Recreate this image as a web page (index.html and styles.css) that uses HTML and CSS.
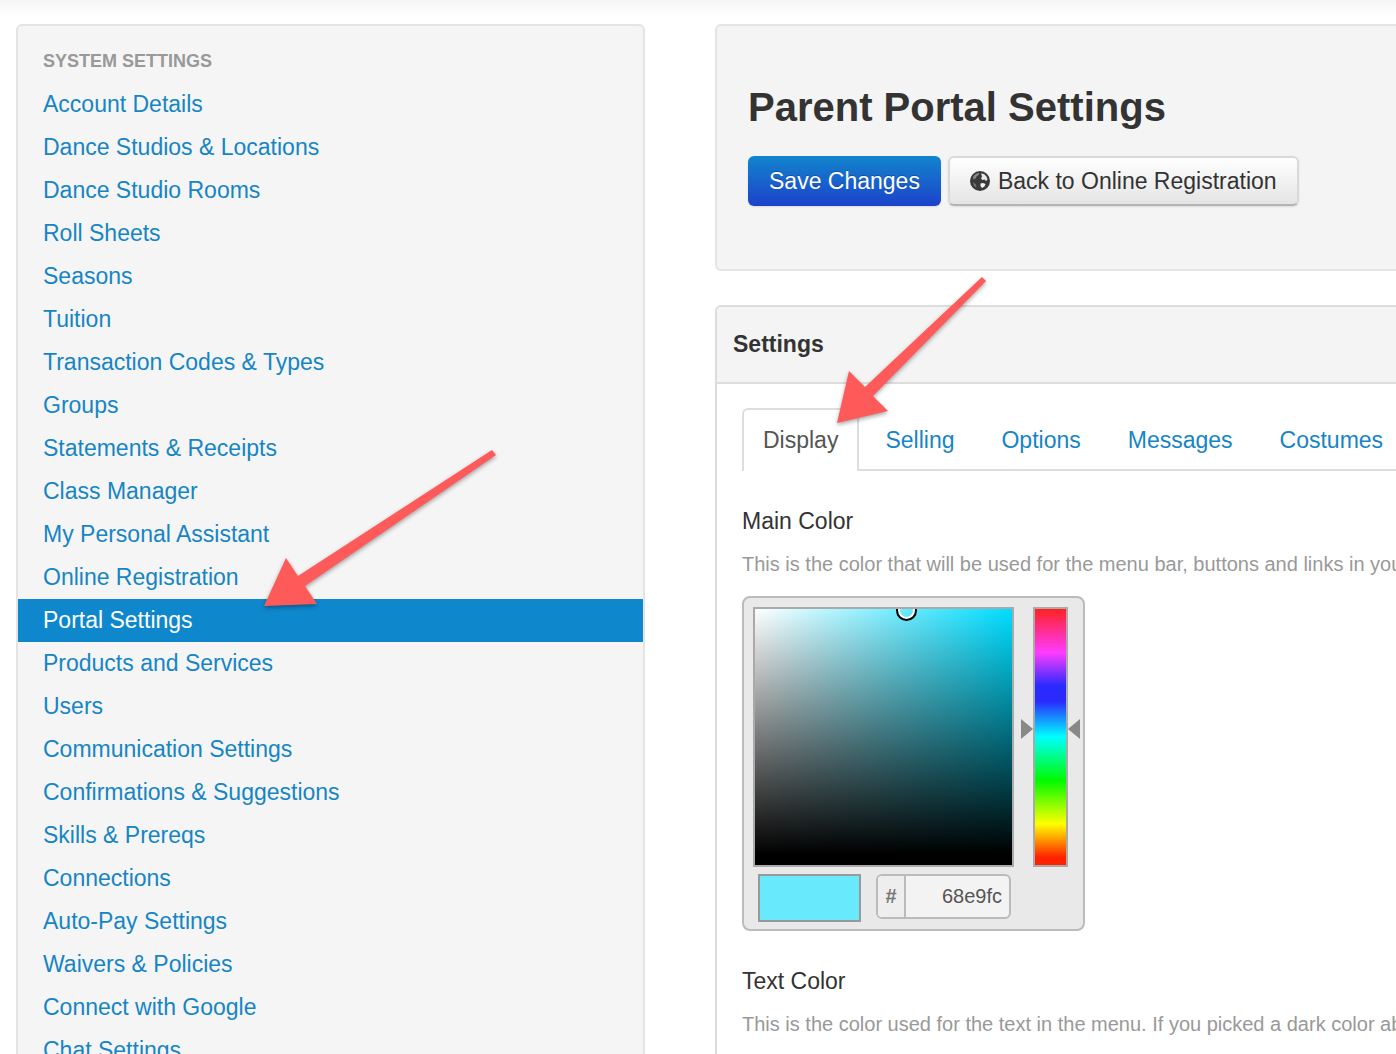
FILE: index.html
```html
<!DOCTYPE html>
<html lang="en">
<head>
<meta charset="utf-8">
<title>Parent Portal Settings</title>
<link rel="stylesheet" href="styles.css">
</head>
<body>
<div class="page">
  <nav class="sidebar" aria-labelledby="nav-title">
    <h2 class="nav-title" id="nav-title">System Settings</h2>
    <ul class="nav-list">
      <li><a class="nav-link" href="#">Account Details</a></li>
      <li><a class="nav-link" href="#">Dance Studios &amp; Locations</a></li>
      <li><a class="nav-link" href="#">Dance Studio Rooms</a></li>
      <li><a class="nav-link" href="#">Roll Sheets</a></li>
      <li><a class="nav-link" href="#">Seasons</a></li>
      <li><a class="nav-link" href="#">Tuition</a></li>
      <li><a class="nav-link" href="#">Transaction Codes &amp; Types</a></li>
      <li><a class="nav-link" href="#">Groups</a></li>
      <li><a class="nav-link" href="#">Statements &amp; Receipts</a></li>
      <li><a class="nav-link" href="#">Class Manager</a></li>
      <li><a class="nav-link" href="#">My Personal Assistant</a></li>
      <li><a class="nav-link" href="#">Online Registration</a></li>
      <li><a class="nav-link active" href="#" aria-current="page">Portal Settings</a></li>
      <li><a class="nav-link" href="#">Products and Services</a></li>
      <li><a class="nav-link" href="#">Users</a></li>
      <li><a class="nav-link" href="#">Communication Settings</a></li>
      <li><a class="nav-link" href="#">Confirmations &amp; Suggestions</a></li>
      <li><a class="nav-link" href="#">Skills &amp; Prereqs</a></li>
      <li><a class="nav-link" href="#">Connections</a></li>
      <li><a class="nav-link" href="#">Auto-Pay Settings</a></li>
      <li><a class="nav-link" href="#">Waivers &amp; Policies</a></li>
      <li><a class="nav-link" href="#">Connect with Google</a></li>
      <li><a class="nav-link" href="#">Chat Settings</a></li>
    </ul>
  </nav>

  <main class="content">
    <header class="hero">
      <h1 class="hero-title">Parent Portal Settings</h1>
      <div class="actions">
        <button class="btn btn-primary" type="button">Save Changes</button>
        <button class="btn" type="button">
          <svg class="globe" viewBox="0 0 20 20" aria-hidden="true">
            <circle cx="10" cy="10" r="10" fill="#3a3a3a"/>
            <path d="M3 6C4.500 3.500 7 2 9.500 2L8.500 4 6.500 5.500 5.500 7.500 3.500 8.500Z" fill="#8a8a8a"/>
            <path d="M11 2.500L14 3 16.500 5.500 17.500 8.500 16 10 14.500 8.500 12.500 9 11 7.500 12 5.500Z" fill="#e8e8e8"/>
            <path d="M10.500 12.500L13 12 15.500 13 14.500 15.500 12 17 10.500 15Z" fill="#f4f4f4"/>
            <path d="M3 11.500L5.500 13 6.500 15.500 6 16.500C4.500 15.500 3.300 13.500 3 11.500Z" fill="#777"/>
          </svg>
          Back to Online Registration
        </button>
      </div>
    </header>

    <section class="panel">
      <h2 class="panel-title">Settings</h2>
      <div class="panel-body">
        <ul class="tabs">
          <li><a class="tab active" href="#">Display</a></li>
          <li><a class="tab" href="#">Selling</a></li>
          <li><a class="tab" href="#">Options</a></li>
          <li><a class="tab" href="#">Messages</a></li>
          <li><a class="tab" href="#">Costumes</a></li>
        </ul>

        <div class="field">
          <label class="field-label" for="main-color">Main Color</label>
          <p class="help">This is the color that will be used for the menu bar, buttons and links in your portal.</p>
          <div class="picker">
            <div class="shade"><span class="shade-marker"></span></div>
            <div class="hue">
              <input class="hue-range" type="range" min="0" max="360" value="188" aria-label="Hue">
            </div>
            <div class="picker-value">
              <div class="swatch"></div>
              <div class="hex">
                <span class="hex-prefix">#</span>
                <input class="hex-input" id="main-color" type="text" value="68e9fc">
              </div>
            </div>
          </div>
        </div>

        <div class="field">
          <h3 class="field-label">Text Color</h3>
          <p class="help">This is the color used for the text in the menu. If you picked a dark color above, choose a light one.</p>
        </div>
      </div>
    </section>
  </main>

  <svg class="pointer pointer-nav" viewBox="0 0 240 170" aria-hidden="true">
    <path d="M4 161L26 113 38 131 232 5 236 10 45 141 57 159Z"/>
  </svg>
  <svg class="pointer pointer-tab" viewBox="0 0 160 160" aria-hidden="true">
    <path d="M7 153L19 101 35 117 152 7 156 11 43 126 58 141Z"/>
  </svg>
</div>
</body>
</html>
```

FILE: styles.css
```css
* {
  box-sizing: border-box;
}

html,
body {
  height: 100%;
  overflow: hidden;
}

body {
  margin: 0;
  background: #fff;
  color: #333;
  font: 23px/43px "Liberation Sans", Arial, sans-serif;
}

h1,
h2,
h3,
p,
ul {
  margin: 0;
  padding: 0;
}

ul {
  list-style: none;
}

a {
  color: #1685c4;
  text-decoration: none;
}

.page {
  position: relative;
  display: flex;
  gap: 70px;
  align-items: flex-start;
  padding: 24px 16px;
  background: linear-gradient(#f5f5f5, #fff 16px);
}

/* Sidebar */
.sidebar {
  flex: 0 0 47%;
  max-width: 629px;
  padding: 14px 0;
  background: #f5f5f5;
  border: 2px solid #e4e4e4;
  border-radius: 6px;
}

.nav-title {
  padding: 0 25px;
  color: #999;
  font-size: 18px;
  line-height: 43px;
  text-transform: uppercase;
}

.nav-link {
  display: block;
  padding: 0 25px;
  white-space: nowrap;
}

.nav-link.active {
  background: #0e87cd;
  color: #fff;
}

/* Main column */
.content {
  flex: 0 0 75%;
}

.hero {
  padding: 56px 31px 63px;
  margin-bottom: 34px;
  background: #f4f4f4;
  border: 2px solid #e4e4e4;
  border-radius: 6px;
}

.hero-title {
  margin-bottom: 24px;
  font-size: 40px;
  line-height: 50px;
}

.actions {
  display: flex;
  gap: 7px;
}

.btn {
  display: flex;
  align-items: center;
  gap: 8px;
  height: 50px;
  padding: 0 20px;
  background: linear-gradient(#fff, #e4e4e4);
  border: 2px solid #d9d9d9;
  border-bottom-color: #b4b4b4;
  border-radius: 6px;
  box-shadow: 0 1px 2px rgba(0, 0, 0, 0.1);
  color: #333;
  font: inherit;
  white-space: nowrap;
}

.btn-primary {
  padding: 0 19px;
  background: linear-gradient(#1285cd, #1c42cb) border-box;
  border-color: transparent;
  color: #fff;
  text-shadow: 0 -1px 0 rgba(0, 0, 0, 0.25);
}

.globe {
  width: 20px;
  height: 20px;
}

.panel {
  border: 2px solid #ddd;
  border-radius: 6px;
}

.panel-title {
  padding: 0 16px;
  background: #f4f4f4;
  border-bottom: 2px solid #ddd;
  border-radius: 4px 4px 0 0;
  font-size: 23px;
  line-height: 75px;
}

.panel-body {
  padding: 24px 25px;
}

/* Tabs */
.tabs {
  display: flex;
  gap: 5px;
  height: 63px;
  margin-bottom: 29px;
  border-bottom: 2px solid #ddd;
}

.tab {
  display: block;
  height: 63px;
  padding: 0 19px;
  border: 2px solid transparent;
  border-bottom: 0;
  border-radius: 6px 6px 0 0;
  line-height: 60px;
}

.tab.active {
  background: #fff;
  border-color: #ddd;
  color: #555;
}

/* Fields */
.field {
  margin-bottom: 29px;
}

.field-label {
  display: block;
  font-size: 23px;
  font-weight: 400;
}

.help {
  margin-bottom: 10px;
  color: #999;
  font-size: 20px;
  white-space: nowrap;
}

/* Color picker */
.picker {
  display: grid;
  grid-template-columns: 261px 35px;
  gap: 7px 19px;
  width: 343px;
  padding: 9px 9px 7px;
  background: #e9e9e9;
  border: 2px solid #bbb;
  border-radius: 8px;
}

.shade {
  position: relative;
  height: 260px;
  overflow: hidden;
  background: linear-gradient(transparent, #000 96%), linear-gradient(to right, #fff, #00dcff);
  border: 2px solid #aaa;
}

.shade-marker {
  position: absolute;
  top: -9px;
  left: 141px;
  width: 21px;
  height: 21px;
  border: 2px solid #000;
  border-radius: 50%;
  box-shadow: inset 0 0 0 2px #fff;
}

.hue {
  position: relative;
  height: 260px;
}

.hue::before,
.hue::after {
  content: "";
  position: absolute;
  top: 112px;
  border: solid transparent;
  border-width: 10px 0;
}

.hue::before {
  right: 100%;
  border-left: 12px solid #888;
}

.hue::after {
  left: 100%;
  border-right: 12px solid #888;
}

.hue-range {
  display: block;
  width: 100%;
  height: 100%;
  margin: 0;
  appearance: none;
  writing-mode: vertical-lr;
  background: linear-gradient(#f22, #ff2d8c 8%, #ff3cff 17%, #2a2aff 30%, #2a2aff 36%, #00ffff 50%, #00fa00 67%, #ff0 84%, #f20 97%);
  border: 2px solid #aaa;
}

.hue-range::-webkit-slider-thumb {
  appearance: none;
  width: 100%;
  height: 1px;
  opacity: 0;
}

.picker-value {
  grid-column: 1 / -1;
  display: flex;
  gap: 15px;
  align-items: flex-start;
  padding-left: 5px;
}

.swatch {
  width: 103px;
  height: 48px;
  background: #68e9fc;
  border: 2px solid #999;
}

.hex {
  display: flex;
  width: 135px;
  height: 45px;
  background: #f3f3f3;
  border: 2px solid #bbb;
  border-radius: 6px;
  font-size: 20px;
  line-height: 41px;
}

.hex-prefix {
  flex: 0 0 28px;
  background: #eee;
  border-right: 2px solid #bbb;
  border-radius: 4px 0 0 4px;
  color: #777;
  font-weight: 700;
  text-align: center;
}

.hex-input {
  flex: 1;
  min-width: 0;
  padding: 0 7px;
  background: transparent;
  border: 0;
  color: #555;
  font: inherit;
  text-align: right;
}

/* Callout arrows laid over the page */
.pointer {
  position: absolute;
  fill: #ff5a5a;
  filter: drop-shadow(0 2px 2px rgba(0, 0, 0, 0.35));
  pointer-events: none;
}

.pointer-nav {
  top: 445px;
  left: 260px;
  width: 240px;
  height: 170px;
}

.pointer-tab {
  top: 270px;
  left: 830px;
  width: 160px;
  height: 160px;
}
```
